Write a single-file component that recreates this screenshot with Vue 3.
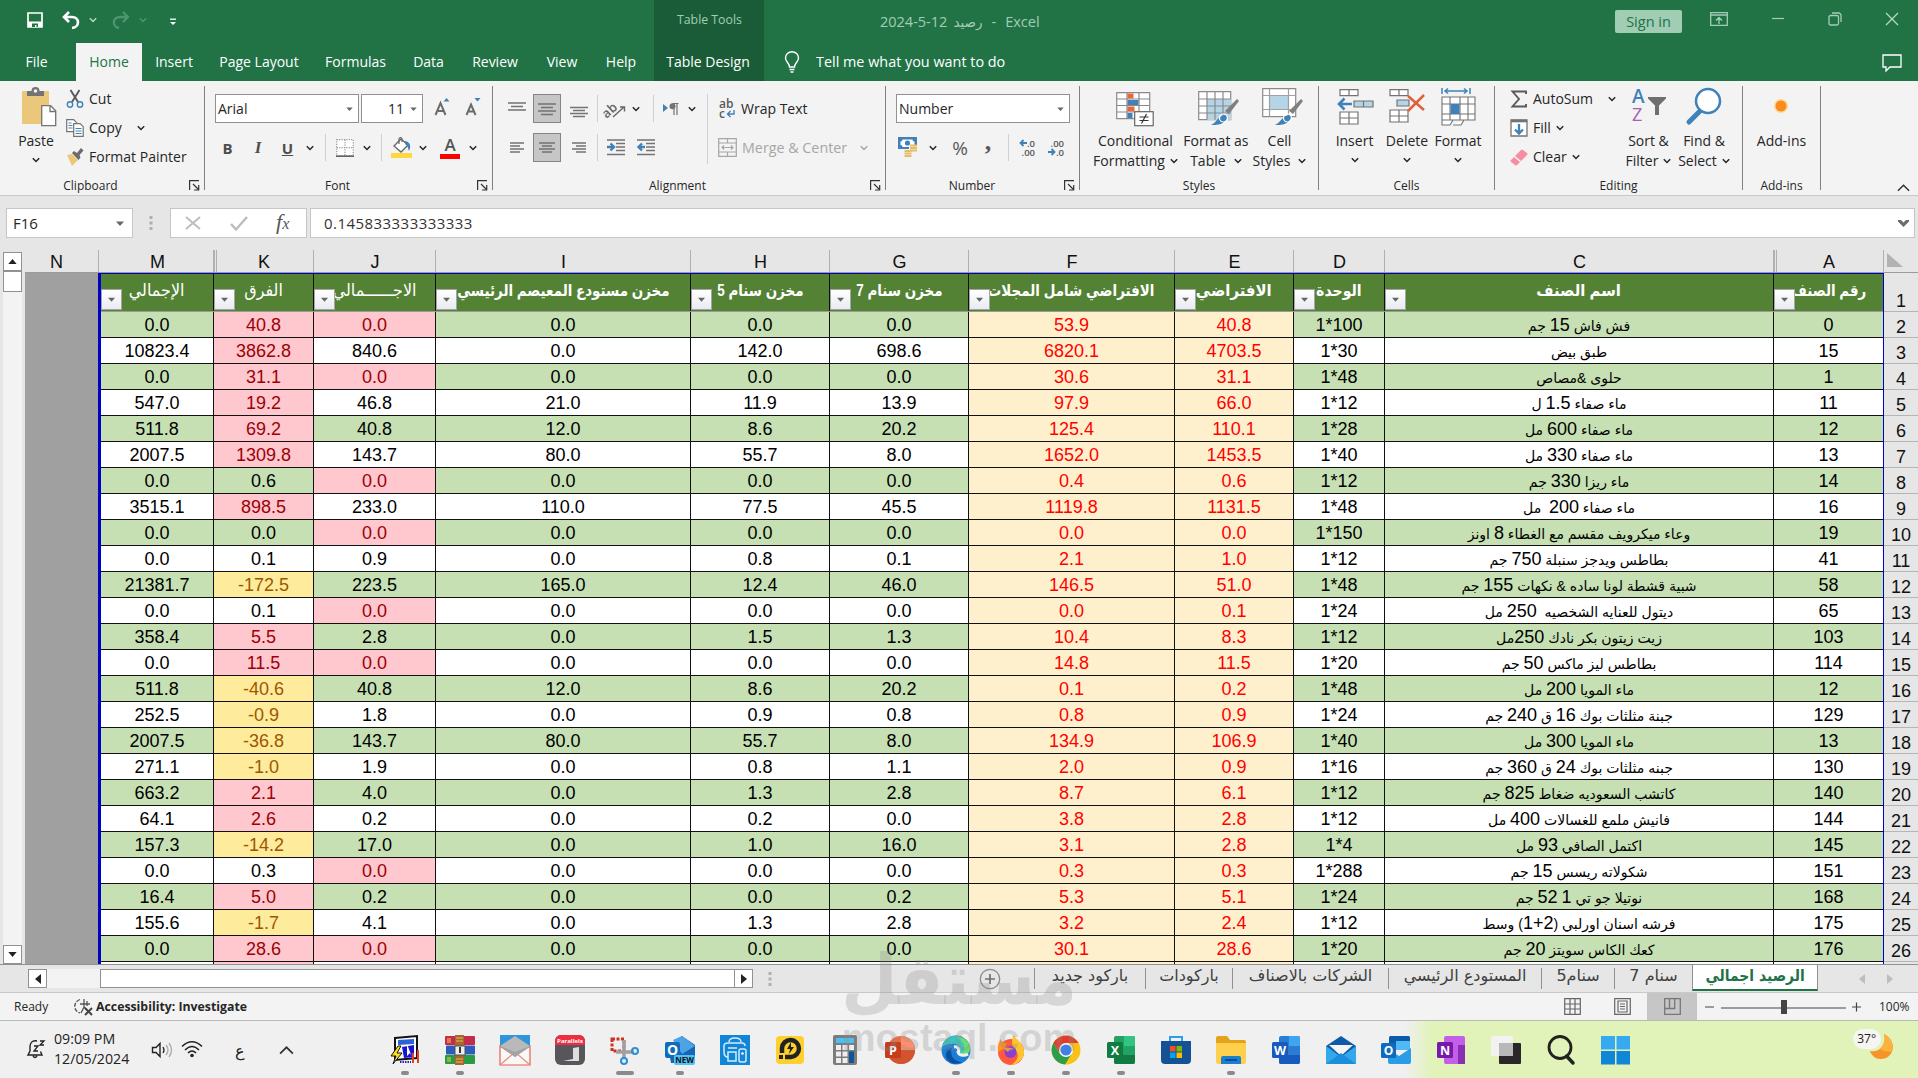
<template>
  <div class="screen">
    <header class="titlebar">
      <div class="quick">
        <Icon name="save" :w="16" :h="16" />
        <Icon name="undo" :w="20" :h="18" />
        <Icon name="chev" class="pale" :w="8" :h="6" />
        <Icon name="redo" :w="20" :h="18" />
        <Icon name="chev" class="dim" :w="8" :h="6" />
        <Icon name="custom" :w="8" :h="8" />
      </div>
      <div class="tools">Table Tools</div>
      <div class="doc">
        <span>2024-5-12</span><span class="doc-ar">رصيد</span><span class="dash">-</span><span>Excel</span>
      </div>
      <button class="signin">Sign in</button>
      <div class="window">
        <Icon name="ribbonOpts" :w="18" :h="14" />
        <Icon name="minimize" :w="14" :h="14" />
        <Icon name="restore" :w="14" :h="14" />
        <Icon name="close" :w="14" :h="14" />
      </div>
    </header>

    <nav class="tabs">
      <span v-for="t in tabs" :key="t.label" class="tab" :class="t.cls" :style="{ width: t.w + 'px' }">
        <b>{{ t.label }}</b>
      </span>
      <Icon name="bulb" class="bulb" :w="16" :h="22" />
      <span class="tell">Tell me what you want to do</span>
      <Icon name="comment" class="comment" :w="20" :h="18" />
    </nav>

    <section class="ribbon">
      <div class="group clipboard">
        <div class="clip-body">
          <div class="big paste">
            <Icon name="paste" :w="34" :h="40" />
            <span>Paste</span>
            <Icon name="chev" :w="8" :h="6" />
          </div>
          <div class="stack">
            <div class="line"><Icon name="cut" :w="18" :h="18" /><span>Cut</span></div>
            <div class="line"><Icon name="copy" :w="18" :h="18" /><span>Copy</span><Icon name="chev" class="gap-chev" :w="8" :h="6" /></div>
            <div class="line"><Icon name="painter" :w="18" :h="18" /><span class="tight">Format Painter</span></div>
          </div>
        </div>
        <div class="caption">Clipboard<Icon name="launch" class="launch" :w="11" :h="11" /></div>
      </div>

      <div class="group font">
        <div class="row font-top">
          <div class="select"><span>Arial</span><Icon name="tri" :w="7" :h="4" /></div>
          <div class="select size"><span>11</span><Icon name="tri" :w="7" :h="4" /></div>
          <Icon name="grow" :w="16" :h="18" />
          <Icon name="shrink" :w="16" :h="18" />
        </div>
        <div class="row font-bottom">
          <b class="fmt">B</b><i class="fmt ital">I</i><u class="fmt">U</u>
          <Icon name="chev" :w="8" :h="6" /><s class="bar" />
          <Icon name="borders" :w="18" :h="18" /><Icon name="chev" :w="8" :h="6" /><s class="bar" />
          <Icon name="fillColor" :w="21" :h="21" /><Icon name="chev" :w="8" :h="6" />
          <div class="fontcolor">A</div><Icon name="chev" :w="8" :h="6" />
        </div>
        <div class="caption">Font<Icon name="launch" class="launch" :w="11" :h="11" /></div>
      </div>

      <div class="group align">
        <div class="align-body">
          <div class="align-left">
            <div class="row align-row">
              <Icon name="alTop" :w="18" :h="16" />
              <div class="pressed"><Icon name="alMid" :w="18" :h="16" /></div>
              <Icon name="alBot" :w="18" :h="16" /><s class="bar" />
              <Icon name="orient" :w="20" :h="18" /><Icon name="chev" :w="8" :h="6" /><s class="bar" />
              <Icon name="rtl" :w="16" :h="14" /><Icon name="chev" :w="8" :h="6" />
            </div>
            <div class="row align-row second">
              <Icon name="alLeft" :w="16" :h="14" />
              <div class="pressed"><Icon name="alCenter" :w="18" :h="14" /></div>
              <Icon name="alRight" :w="16" :h="14" /><s class="bar" />
              <Icon name="indent" :w="18" :h="17" /><Icon name="outdent" :w="18" :h="17" />
            </div>
          </div>
          <div class="align-side">
            <div class="wrap"><Icon name="wrapText" :w="18" :h="20" /><span>Wrap Text</span></div>
            <div class="wrap off"><Icon name="merge" :w="19" :h="19" /><span>Merge &amp; Center</span><Icon name="chev" class="off-chev" :w="8" :h="6" /></div>
          </div>
        </div>
        <div class="caption">Alignment<Icon name="launch" class="launch" :w="11" :h="11" /></div>
      </div>

      <div class="group number">
        <div class="select numsel"><span>Number</span><Icon name="tri" :w="7" :h="4" /></div>
        <div class="row num-row">
          <Icon name="money" :w="24" :h="21" /><Icon name="chev" :w="8" :h="6" />
          <span class="pct">%</span><span class="comma">,</span><s class="bar" />
          <div class="dec"><span><Icon name="arrL" :w="8" :h="8" />.0</span><span>.00</span></div>
          <div class="dec"><span>.00</span><span><Icon name="arrR" :w="8" :h="8" />.0</span></div>
        </div>
        <div class="caption">Number<Icon name="launch" class="launch" :w="11" :h="11" /></div>
      </div>

      <div class="group styles">
        <div class="bigs">
          <div class="big"><Icon name="cond" :w="38" :h="40" /><span>Conditional</span><span>Formatting <Icon name="chev" :w="8" :h="6" /></span></div>
          <div class="big"><Icon name="fmtTable" :w="38" :h="40" /><span>Format as</span><span>Table <Icon name="chev" :w="8" :h="6" /></span></div>
          <div class="big"><Icon name="cellStyles" :w="38" :h="40" /><span>Cell</span><span>Styles <Icon name="chev" :w="8" :h="6" /></span></div>
        </div>
        <div class="caption">Styles</div>
      </div>

      <div class="group cells">
        <div class="bigs">
          <div class="big"><Icon name="insert" :w="38" :h="40" /><span>Insert</span><Icon name="chev" :w="8" :h="6" /></div>
          <div class="big"><Icon name="del" :w="38" :h="40" /><span>Delete</span><Icon name="chev" :w="8" :h="6" /></div>
          <div class="big"><Icon name="format" :w="38" :h="40" /><span>Format</span><Icon name="chev" :w="8" :h="6" /></div>
        </div>
        <div class="caption">Cells</div>
      </div>

      <div class="group editing">
        <div class="edit-body">
          <div class="stack">
            <div class="line"><Icon name="sigma" :w="18" :h="18" /><span>AutoSum</span><Icon name="chev" class="gap-chev" :w="8" :h="6" /></div>
            <div class="line"><Icon name="fillDown" :w="18" :h="18" /><span>Fill</span><Icon name="chev" class="near" :w="8" :h="6" /></div>
            <div class="line"><Icon name="eraser" :w="18" :h="18" /><span>Clear</span><Icon name="chev" class="near" :w="8" :h="6" /></div>
          </div>
          <div class="big sort"><Icon name="sort" :w="38" :h="40" /><span>Sort &amp;</span><span>Filter <Icon name="chev" :w="8" :h="6" /></span></div>
          <div class="big find"><Icon name="find" :w="38" :h="40" /><span>Find &amp;</span><span>Select <Icon name="chev" :w="8" :h="6" /></span></div>
        </div>
        <div class="caption">Editing</div>
      </div>

      <div class="group addins">
        <div class="bigs"><div class="big"><Icon name="addin" :w="38" :h="40" /><span>Add-ins</span></div></div>
        <div class="caption">Add-ins</div>
      </div>
      <Icon name="up" class="collapse" :w="13" :h="8" />
    </section>

    <section class="formula">
      <div class="namebox"><span>F16</span><Icon name="tri" :w="8" :h="5" /></div>
      <Icon name="dots" class="dots" :w="4" :h="14" />
      <div class="fx">
        <Icon name="cancel" :w="16" :h="14" />
        <Icon name="check" :w="18" :h="15" />
        <span class="fxs">f<small>x</small></span>
      </div>
      <div class="input"><span>0.145833333333333</span><Icon name="expand" :w="11" :h="7" /></div>
    </section>

    <section class="grid">
      <div class="vscroll">
        <div class="sbtn"><Icon name="triUp" :w="9" :h="5" /></div>
        <div class="thumb" />
        <div class="space" />
        <div class="sbtn"><Icon name="triDown" :w="9" :h="5" /></div>
      </div>
      <div class="sheet">
        <div class="letters">
          <span v-for="l in letters" :key="l" :class="{ dbl: l === 'K' || l === 'A' }">{{ l }}</span>
          <span class="corner"><Icon name="corner" :w="16" :h="14" /></span>
        </div>
        <div class="body">
          <div class="void" />
          <div class="table">
            <div class="head">
              <div v-for="h in heads" :key="h.text" class="th" :class="h.cls">
                <span dir="rtl">{{ h.text }}</span>
                <div class="filter"><Icon name="tri" :w="7" :h="5" /></div>
              </div>
            </div>
            <div v-for="(r, i) in rows" :key="i" class="tr" :class="{ even: i % 2 === 0 }">
              <div v-for="(c, j) in r" :key="j" :class="cellClass(c, j)">
                <span v-if="j === 9" dir="rtl" class="ar"><template v-for="(p, k) in split(c)" :key="k"><bdi v-if="k % 2" class="n" dir="ltr">{{ p }}</bdi><template v-else>{{ p }}</template></template></span>
                <template v-else>{{ c }}</template>
              </div>
            </div>
            <div class="tr last"><div v-for="j in 11" :key="j" :class="{ pink: j === 2, cream: j === 7 || j === 8 }" /></div>
          </div>
          <div class="nums">
            <span v-for="n in 26" :key="n">{{ n }}</span>
          </div>
        </div>
      </div>
    </section>

    <section class="sheetbar">
      <div class="sbtn"><Icon name="triLeft" :w="6" :h="10" /></div>
      <div class="htrack" />
      <div class="hthumb" />
      <div class="sbtn"><Icon name="triRight" :w="6" :h="10" /></div>
      <Icon name="dots" class="hdots" :w="4" :h="14" />
      <Icon name="plus" class="plus" :w="22" :h="22" />
      <div class="stabs">
        <span v-for="s in sheets" :key="s.text" dir="rtl" :class="{ active: s.active }" :style="{ width: s.w + 'px' }"><b>{{ s.text }}</b></span>
      </div>
      <Icon name="triLeft" class="nav" :w="6" :h="10" />
      <Icon name="triRight" class="nav" :w="6" :h="10" />
    </section>

    <section class="status">
      <span class="ready">Ready</span>
      <Icon name="access" :w="20" :h="18" />
      <b>Accessibility: Investigate</b>
      <div class="views">
        <div><Icon name="vNormal" :w="17" :h="17" /></div>
        <div><Icon name="vPage" :w="17" :h="17" /></div>
        <div class="on"><Icon name="vBreak" :w="17" :h="17" /></div>
      </div>
      <div class="zoom"><Icon name="zoomBar" :w="160" :h="16" /></div>
      <span class="pctz">100%</span>
    </section>

    <footer class="taskbar">
      <Icon name="bell" class="bell" :w="20" :h="20" />
      <div class="clock"><span>09:09 PM</span><span>12/05/2024</span></div>
      <Icon name="sound" class="sound" :w="22" :h="18" />
      <Icon name="wifi" class="wifi" :w="22" :h="18" />
      <span class="lang">ع</span>
      <Icon name="up" class="tray" :w="15" :h="9" />
      <div class="apps">
        <div v-for="a in apps" :key="a.icon" class="app">
          <Icon :name="a.icon" :w="30" :h="30" />
          <i v-if="a.run" :class="{ wide: a.run === 2 }" />
        </div>
      </div>
      <div class="weather"><Icon name="moon" :w="28" :h="32" /><span>37°</span></div>
    </footer>

    <div class="mark">
      <div class="mark-ar">مستقل</div>
      <div class="mark-en">mostaql.com</div>
    </div>
  </div>
</template>

<script setup>
import { h } from 'vue';

const G = '#737373';
const B = '#4082b8';
const hl = (pts, c = G, sw = 1.3) =>
  `<path d="${pts.map(([x, y, w]) => `M${x} ${y}h${w}`).join('')}" stroke="${c}" stroke-width="${sw}" fill="none"/>`;
const officeIcon = (dark, mid, light, letter) =>
  `<rect x="8" y="1" width="21" height="28" rx="2" fill="${mid}"/><path d="M18 1h9a2 2 0 0 1 2 2v8h-11z" fill="${light}"/><path d="M8 20h21v7a2 2 0 0 1-2 2H10a2 2 0 0 1-2-2z" fill="${dark}"/><rect x="1" y="7" width="16" height="16" rx="1.500" fill="${dark}"/><text x="9" y="19.500" font-family="Open Sans" font-weight="700" font-size="12.500" fill="#fff" text-anchor="middle">${letter}</text>`;
const brush = `<path d="M39 12 41 14 31 27 27 24z" fill="#808080"/><path d="M24 29c4-3 7 2 3 5-3 4-9 4-14 4 5-2 6-7 11-9z" fill="${B}"/><circle cx="25.500" cy="31" r="4" fill="none" stroke="#fff" stroke-width="1.200"/>`;

// [viewBox, markup]
const icons = {
  save: ['0 0 16 16', '<path d="M1 1h14v14H1z" fill="none" stroke="#fff" stroke-width="1.700"/><path d="M1 9.500h14V15H1z" fill="#fff"/><path d="M5 11.500h6V15H9.500v-2H8v2H5z" fill="#217346"/>'],
  undo: ['0 0 20 18', '<path d="M8 1 3 6l5 5M3 6h8c8 0 8 10 0 11" fill="none" stroke="#fff" stroke-width="2.600"/>'],
  redo: ['0 0 20 18', '<path d="M12 1l5 5-5 5M17 6H9C1 6 1 16 8 17" fill="none" stroke="#4f9470" stroke-width="2.400"/>'],
  custom: ['0 0 8 8', '<path d="M1 1.200h6" stroke="#fff" stroke-width="1.300"/><path d="M1 4h6L4 7z" fill="#fff"/>'],
  chev: ['0 0 8 6', '<path d="M.8 1.200 4 4.500l3.200-3.300" fill="none" stroke="currentColor" stroke-width="1.500"/>'],
  up: ['0 0 14 8', '<path d="M1 7l6-6 6 6" fill="none" stroke="#333" stroke-width="1.600"/>'],
  tri: ['0 0 8 5', '<path d="M0 .500h8L4 5z" fill="#666"/>'],
  triUp: ['0 0 10 6', '<path d="M0 6h10L5 0z" fill="#222"/>'],
  triDown: ['0 0 10 6', '<path d="M0 0h10L5 6z" fill="#222"/>'],
  triLeft: ['0 0 6 10', '<path d="M6 0v10L0 5z" fill="currentColor"/>'],
  triRight: ['0 0 6 10', '<path d="M0 0v10l6-5z" fill="currentColor"/>'],
  ribbonOpts: ['0 0 18 14', '<path d="M.7.700h16.600v12.600H.7zM.7 3h16.600M9 12V6M6 8.500 9 5.500l3 3" fill="none" stroke="#a3cdb6" stroke-width="1.300"/>'],
  minimize: ['0 0 14 14', '<path d="M1 6.500h12" stroke="#a3cdb6" stroke-width="1.200"/>'],
  restore: ['0 0 14 14', '<rect x="1" y="3.500" width="9.500" height="9.500" rx="1.500" fill="none" stroke="#a3cdb6" stroke-width="1.300"/><path d="M4 1h6.500A2.500 2.500 0 0 1 13 3.500V10" fill="none" stroke="#a3cdb6" stroke-width="1.300"/>'],
  close: ['0 0 14 14', '<path d="M1 1l12 12M13 1 1 13" stroke="#b5d8c5" stroke-width="1.300"/>'],
  bulb: ['0 0 16 22', '<path d="M5.500 16c0-4-4-5-4-9a6.500 6.300 0 0 1 13 0c0 4-4 5-4 9zM5.500 18.500h5M6.500 21h3" fill="none" stroke="#fff" stroke-width="1.400"/>'],
  comment: ['0 0 20 18', '<path d="M1 1h18v12H8l-4 4v-4H1z" fill="none" stroke="#fff" stroke-width="1.300"/>'],
  paste: ['0 0 34 40', '<rect x="0" y="4" width="27" height="33" rx="1" fill="#eac77b"/><path d="M5 9V4h4.500a4 4 0 0 1 8 0H22v5z" fill="#737373"/><circle cx="13.500" cy="4" r="1.800" fill="#f3f3f3"/><path d="M19.700 18.700h9l5 5v15h-14z" fill="#fff" stroke="#737373" stroke-width="1.300"/><path d="M28 19v5.500h5.500" fill="none" stroke="#737373" stroke-width="1.300"/>'],
  cut: ['0 0 18 18', `<path d="M4.500 0 12 12M13.500 0 6 12" stroke="#595959" stroke-width="1.900"/><circle cx="4" cy="14.500" r="2.700" fill="none" stroke="${B}" stroke-width="1.400"/><circle cx="14" cy="14.500" r="2.700" fill="none" stroke="${B}" stroke-width="1.400"/>`],
  copy: ['0 0 18 18', `<path d="M.7.700h7l3 3v9H.7z" fill="#fff" stroke="${G}" stroke-width="1.200"/><path d="M7.700 4.700h6.500l3 3v9.600H7.700z" fill="#fff" stroke="${G}" stroke-width="1.200"/>${hl([[2.5, 4, 3], [2.5, 6.500, 4], [2.5, 9, 4], [9.500, 9.500, 6], [9.500, 12, 6], [9.500, 14.500, 6]], B, 1)}`],
  painter: ['0 0 18 18', '<path d="M1 7l5-1 6 6-6 6z" fill="#eac77b"/><path d="M6 5l2-2 3 2 4-5 2.500 2.500L13.500 7l1 2.500L12.500 12z" fill="#6b6b6b"/>'],
  launch: ['0 0 11 11', '<path d="M.6 10V.600H10M4 4l5 5M9.700 5v5H5" fill="none" stroke="#333" stroke-width="1.200"/>'],
  grow: ['0 0 16 18', `<path d="M1.500 17 6.500 5 11.500 17M3.300 13h6.500" fill="none" stroke="#6b6b6b" stroke-width="2"/><path d="M9.500 3.500h6L12.500 0z" fill="${B}"/>`],
  shrink: ['0 0 16 18', `<path d="M1.500 17 6 6.500 10.500 17M3 13.500h6" fill="none" stroke="#6b6b6b" stroke-width="2"/><path d="M9.500 0h6l-3 3.500z" fill="${B}"/>`],
  borders: ['0 0 18 18', `<path d="M.7.700h16.600v16H.7zM9 .700v16M.7 8.700h16.600" fill="#fff" stroke="#999" stroke-width="1.200" stroke-dasharray="1.200 1.200"/><path d="M0 17.200h18" stroke="#555" stroke-width="1.400"/>`],
  fillColor: ['0 0 21 21', `<path d="M3 9 10 2l7 6-7 7z" fill="#fff" stroke="#666" stroke-width="1.300"/><path d="M8 7V2c0-2 3-2 3 0v3" fill="none" stroke="#666" stroke-width="1.200"/><path d="M14 4c6 1 6 6 4 10-1-3-1-5-4-7z" fill="${B}"/><rect x="0" y="16" width="21" height="5" fill="#ffd83d"/>`],
  alTop: ['0 0 18 16', hl([[0, 2, 18], [3, 5.500, 12], [0, 9, 18]])],
  alMid: ['0 0 18 16', hl([[0, 3, 18], [3, 6.500, 12], [0, 10, 18], [3, 13.500, 12]])],
  alBot: ['0 0 18 16', hl([[0, 6.500, 18], [3, 9.500, 12], [0, 12.500, 18], [3, 15.500, 12]])],
  alLeft: ['0 0 16 14', hl([[1, 2, 14], [1, 5, 10], [1, 8, 14], [1, 11, 10]])],
  alCenter: ['0 0 18 14', hl([[1, 2, 16], [4, 5, 10], [1, 8, 16], [4, 11, 10]])],
  alRight: ['0 0 16 14', hl([[1, 2, 14], [5, 5, 10], [1, 8, 14], [5, 11, 10]])],
  orient: ['0 0 20 18', '<text x="-4" y="13" transform="rotate(-42 6 10)" font-family="Open Sans" font-weight="600" font-size="13" fill="#666">ab</text><path d="M7 17 18 7M14 7h4.500v4.500" fill="none" stroke="#666" stroke-width="1.400"/>'],
  rtl: ['0 0 16 14', `<path d="M0 2v8l5-4z" fill="${B}"/><path d="M15.500 1.500h-6M11 1v12M14 1v12" stroke="${G}" stroke-width="1.200"/><circle cx="9.500" cy="4.300" r="3" fill="${G}"/>`],
  indent: ['0 0 18 17', `${hl([[0, 1, 18], [9, 4.500, 9], [9, 8, 9], [9, 11.500, 9], [0, 15.500, 18]])}<path d="M0 8h6M3.500 4.500 7 8l-3.500 3.500" fill="none" stroke="${B}" stroke-width="2.400"/>`],
  outdent: ['0 0 18 17', `${hl([[0, 1, 18], [9, 4.500, 9], [9, 8, 9], [9, 11.500, 9], [0, 15.500, 18]])}<path d="M8 8H2M5 4.500 1.500 8 5 11.500" fill="none" stroke="${B}" stroke-width="2.400"/>`],
  wrapText: ['0 0 18 20', `<text x="1" y="9" font-family="Open Sans" font-weight="600" font-size="12" fill="#595959">ab</text><text x="1" y="19" font-family="Open Sans" font-weight="600" font-size="12" fill="#595959">c</text><path d="M16 11v4H10M12.500 12 9.500 15l3 3" fill="none" stroke="${B}" stroke-width="1.400"/>`],
  merge: ['0 0 19 19', '<path d="M.7.700h17.600v17.600H.7zM.7 5h17.600M.7 14h17.600M9.500.700V5M9.500 14v4.300M4 9.500h11M6 7.500l-2 2 2 2M13 7.500l2 2-2 2" fill="none" stroke="#a6a6a6" stroke-width="1.200"/>'],
  money: ['0 0 24 21', `<rect x="0" y="0" width="19" height="12" fill="${B}"/><path d="M2.500 4.500c2 0 2-2 2-2h10s0 2 2 2v3.500c-2 0-2 2-2 2h-10s0-2-2-2z" fill="#fff"/><circle cx="9.500" cy="6" r="2.600" fill="${B}"/><path d="M11 8h8v12h-8z" fill="#f3f3f3"/><path d="M12 8.500h7M12 11h7M12 13.500h7M6.500 14h7M6.500 16.500h7M6.500 19h7" stroke="#e5bd67" stroke-width="1.900"/>`],
  arrL: ['0 0 8 8', `<path d="M8 4H2M4.500 1 1.500 4l3 3" fill="none" stroke="${B}" stroke-width="1.800"/>`],
  arrR: ['0 0 8 8', `<path d="M0 4h6M3.500 1l3 3-3 3" fill="none" stroke="${B}" stroke-width="1.800"/>`],
  cond: ['0 0 38 40', `<path d="M.7 5.700h33v26h-33zM.7 12h33M.7 18.500h33M.7 25h33M11 5.700v26M23 5.700v26" fill="#fff" stroke="#8a8a8a" stroke-width="1.200"/><path d="M11.500 6.500h6v5h-6zM11.500 19.500h7v5h-7z" fill="#e8683a"/><path d="M11.500 13h11v5h-11zM11.500 26h5v5h-5z" fill="${B}"/><rect x="18.700" y="24.700" width="18.500" height="14" fill="#fff" stroke="#666" stroke-width="1.200"/><path d="M23.500 30h9M23.500 33.500h9M30.500 27l-5 9.500" stroke="#333" stroke-width="1.200"/>`],
  fmtTable: ['0 0 38 40', `<path d="M.7 4.700h32v28h-32z" fill="#fff" stroke="#8a8a8a" stroke-width="1.200"/><path d="M9 12h24v21H9z" fill="#b5d4e6"/><path d="M.7 12h32M.7 19h32M.7 26h32M9 4.700v28M17 4.700v28M25 4.700v28" stroke="#8a8a8a" stroke-width="1.200"/>${brush}`],
  cellStyles: ['0 0 38 40', `<path d="M.7 1.700h33v28h-33z" fill="#fff" stroke="#8a8a8a" stroke-width="1.200"/><path d="M8 9h18v13H8z" fill="#b5d4e6"/><path d="M.7 8.500h33M.7 22.500h33M7.500 1.700v28M26.500 1.700v28" stroke="#a0a0a0" stroke-width="1.200"/>${brush}`],
  insert: ['0 0 38 40', `<path d="M4 2.700h18v6H4zM13 2.700v6M4 25h18v12H4zM13 25v12M4 31h18" fill="#fff" stroke="${G}" stroke-width="1.200"/><path d="M18 14h19v6H18zM27.500 14v6" fill="#b5d4e6" stroke="${G}" stroke-width="1.200"/><path d="M16 17H3M8.500 11.500 3 17l5.500 5.500" fill="none" stroke="${B}" stroke-width="2.600"/>`],
  del: ['0 0 38 40', `<path d="M2 2.700h18v6H2zM11 2.700v6M2 23h18v12H2zM11 23v12M2 29h18" fill="#fff" stroke="${G}" stroke-width="1.200"/><path d="M9 13h12v6H9z" fill="#b5d4e6" stroke="${G}" stroke-width="1.200"/><path d="M20 9 36 23M36 8 20 24" stroke="#de6137" stroke-width="2.500"/>`],
  format: ['0 0 38 40', `<path d="M3 1v6M31 1v6M6 4h22M9 1.500 6 4l3 2.500M25 1.500 28 4l-3 2.500" fill="none" stroke="${B}" stroke-width="1.500"/><path d="M3 10h33v23H3zM3 17h33M3 27h33M11 10v23M21 10v23M29 10v23M3 33v5h8l3-5M14 38h8l3-5" fill="#fff" stroke="${G}" stroke-width="1.100"/><rect x="11.500" y="17" width="9" height="10" fill="${B}"/>`],
  sigma: ['0 0 18 18', '<path d="M16 4V1.500H2.500L9 9l-6.500 7.500H16V14" fill="none" stroke="#595959" stroke-width="1.900"/>'],
  fillDown: ['0 0 18 18', `<path d="M1 1h16v16H1z" fill="#fff" stroke="${G}" stroke-width="1.300"/><path d="M1 2h16" stroke="${G}" stroke-width="2.600"/><path d="M9 5v9M5 10.500 9 14.500l4-4" fill="none" stroke="${B}" stroke-width="2.300"/>`],
  eraser: ['0 0 18 18', '<path d="M1 12 11 2q1-1 2 0l4 3q1 1 0 2L7 17q-1 1-2 0l-4-3q-1-1 0-2z" fill="#f58ea3"/><path d="M4.500 8.500l6 5" stroke="#fff" stroke-width="1.200"/>'],
  sort: ['0 0 38 40', `<text x="2" y="16" font-family="Open Sans" font-weight="600" font-size="19" fill="${B}">A</text><text x="2" y="34" font-family="Open Sans" font-size="18" fill="#a463b0">Z</text><path d="M18 10h18v1.500l-7 7V28h-4v-9.500l-7-7z" fill="#6f6f6f"/>`],
  find: ['0 0 38 40', `<path d="M16 23 4 35" stroke="${B}" stroke-width="5" stroke-linecap="round"/><circle cx="23" cy="14" r="12" fill="#fff" stroke="${B}" stroke-width="2.500"/>`],
  addin: ['0 0 38 40', '<circle cx="19" cy="17" r="7" fill="#ffd79a"/><circle cx="19" cy="17" r="5.500" fill="#fa8c1e"/>'],
  dots: ['0 0 4 14', '<path d="M.5 0h3v3h-3zM.5 5.500h3v3h-3zM.5 11h3v3h-3z" fill="#b0b0b0"/>'],
  cancel: ['0 0 16 14', '<path d="M1 1l14 12M15 1 1 13" stroke="#bdbdbd" stroke-width="2"/>'],
  check: ['0 0 18 15', '<path d="M1 8l5 5.500L17 1" fill="none" stroke="#bdbdbd" stroke-width="2.500"/>'],
  expand: ['0 0 11 7', '<path d="M0 0h3l2.500 2.500L8 0h3v1.500L5.500 7 0 1.500z" fill="#6b6b6b"/>'],
  corner: ['0 0 16 14', '<path d="M0 0l16 14H0z" fill="#b2b2b2"/>'],
  plus: ['0 0 22 22', '<circle cx="11" cy="11" r="9.700" fill="none" stroke="#8a8a8a" stroke-width="1.300"/><path d="M11 6v10M6 11h10" stroke="#707070" stroke-width="1.700"/>'],
  access: ['0 0 20 18', '<path d="M6 1.500C-1 4-1 13 6 15" fill="none" stroke="#555" stroke-width="1.300" stroke-dasharray="4 1.500"/><path d="M6 6h10M10 1v8l-3 6M10 9l3 3M13 3v5" fill="none" stroke="#555" stroke-width="1.300"/><path d="M11 10l7 7M18 10l-7 7" stroke="#444" stroke-width="2"/>'],
  vNormal: ['0 0 17 17', '<path d="M.7.700h15.600v15.600H.7zM6 .700v15.600M11 .700v15.600M.7 6h15.600M.7 11h15.600" fill="none" stroke="#666" stroke-width="1.200"/>'],
  vPage: ['0 0 17 17', '<path d="M.7.700h15.600v15.600H.7zM4 3h9v11H4zM6 6h5M6 8.500h5M6 11h5" fill="none" stroke="#666" stroke-width="1.200"/>'],
  vBreak: ['0 0 17 17', '<path d="M.7.700h15.600v15.600H.7zM.7 10.500h10V.700M5.500.700v9.800" fill="none" stroke="#777" stroke-width="1.300"/>'],
  zoomBar: ['0 0 160 16', '<path d="M1 8h9M148 8h9M152.500 3.500v9M17 9h125" stroke="#444" stroke-width="1.200"/><rect x="77" y="1" width="6" height="14" fill="#444"/>'],
  bell: ['0 0 20 20', '<path d="M11 2C6 1 4 4 4 8v4l-2 4h14l-1.500-3.500M7 17q2 3 4 0" fill="none" stroke="#222" stroke-width="1.400"/><path d="M8 7h4l-4 5h4M14 2h4l-4 4h4" fill="none" stroke="#222" stroke-width="1.300"/>'],
  sound: ['0 0 22 18', '<path d="M1.500 6.500h3.500l4-4v13l-4-4H1.500z" fill="none" stroke="#222" stroke-width="1.400"/><path d="M12 6q2 3 0 6" fill="none" stroke="#222" stroke-width="1.300"/><path d="M15 4q4 5 0 10M18 2q5 7 0 14" fill="none" stroke="#aaa" stroke-width="1.300"/>'],
  wifi: ['0 0 22 18', '<path d="M1 6.500q10-9.500 20 0M4 10q7-7 14 0M7 13q4-4 8 0" fill="none" stroke="#222" stroke-width="1.600"/><circle cx="11" cy="15.500" r="1.800" fill="#222"/>'],
  designer: ['0 0 30 30', '<path d="M5 3 27 1v22L5 25z" fill="#fff" stroke="#111" stroke-width="2"/><path d="M8 5l16-1v5L8 10z" fill="#2a62d8"/><path d="M12 12l12-2v12l-10 1z" fill="#1717d0"/><path d="M17 9v12l3-3 2 4" fill="#fff"/><path d="M8 11 1 21h5l-3 8 9-11H7l4-7z" fill="#ffdf1c" stroke="#111"/><path d="M22 18h2v10h-2zM27 15h2v13h-2z" fill="#e8401f"/><path d="M10 27h11" stroke="#2222c0" stroke-width="2" stroke-dasharray="1.500 1"/>'],
  winrar: ['0 0 30 30', '<rect x="0" y="1" width="30" height="9" rx="1" fill="#c52c4c"/><rect x="1" y="10.500" width="29" height="9" rx="1" fill="#2c5cbd"/><rect x="0" y="20" width="30" height="9" rx="1" fill="#2a9a44"/><path d="M3 3v5M5 3v5M3 22v5M5 22v5" stroke="#f0d050"/><rect x="10" y="0" width="9" height="30" fill="#a8682c"/><rect x="10" y="11" width="10" height="9" fill="#eee" stroke="#555"/><path d="M15 12v6" stroke="#333" stroke-width="2"/><path d="M11 3h7M11 6h7M11 24h7M11 27h7" stroke="#e8b860"/>'],
  gmail: ['0 0 30 30', '<rect width="30" height="14" fill="#2f96dc"/><path d="M0 11v19h30V11L15 21z" fill="#f8f8f8" stroke="#e8604f" stroke-width="1.200"/><path d="M0 30l15-13 15 13" fill="none" stroke="#ee8a80" stroke-width="1.200"/><path d="M0 11 15 1l15 10-15 11z" fill="#b9b9b9"/><path d="M0 11l15 11 15-11-15 6z" fill="#a2a2a2"/>'],
  parallels: ['0 0 30 30', '<rect x="0" y="0" width="30" height="30" rx="6" fill="#57575b"/><path d="M0 10V6a6 6 0 0 1 6-6h18a6 6 0 0 1 6 6v4z" fill="#ee2c42"/><text x="15" y="8" font-family="Open Sans" font-weight="700" font-size="6" fill="#fff" text-anchor="middle">Parallels</text><path d="M18 13l6-1v14H8l10-2z" fill="#ddd"/>'],
  snip: ['0 0 30 30', '<path d="M2 4h12v12H2z" fill="none" stroke="#cf3120" stroke-width="3" stroke-dasharray="3 1.500"/><path d="M14 5v18M6 17h18" stroke="#a0a0a0" stroke-width="3.500"/><circle cx="25" cy="16" r="3" fill="none" stroke="#2d8fd8" stroke-width="2"/><circle cx="14" cy="26" r="3" fill="none" stroke="#2d8fd8" stroke-width="2"/>'],
  outlookNew: ['0 0 30 30', '<path d="M3 12 17 1l13 9v18H6z" fill="#1766b5"/><path d="M8 5 17 1l13 10-13 8z" fill="#4da3e4"/><rect x="0" y="7" width="15" height="16" rx="2" fill="#0f6cbd"/><text x="7.500" y="20" font-family="Open Sans" font-weight="700" font-size="14" fill="#fff" text-anchor="middle">O</text><rect x="9" y="20" width="21" height="10" rx="2" fill="#4fc3f7"/><text x="19.500" y="28" font-family="Open Sans" font-weight="700" font-size="8" fill="#111" text-anchor="middle">NEW</text>'],
  printer: ['0 0 30 30', '<rect width="30" height="30" fill="#0f86d8"/><path d="M9 7q0-4 6-4t6 4M4 17V11q0-3 4-3h14q3 0 3 3M8 13h9M8 17h8v9H8zM4 17q0 5 4 5" fill="none" stroke="#d5ebfa" stroke-width="1.500"/><rect x="19" y="14" width="7" height="13" rx="2" fill="#0f86d8" stroke="#d5ebfa" stroke-width="1.500"/><circle cx="22.500" cy="18.500" r="1.300" fill="#fff"/>'],
  disk: ['0 0 30 30', '<rect x="1" y="1" width="28" height="28" rx="4" fill="#fdd02c"/><path d="M7 18V13a8.500 8.500 0 1 1 9 9H10" fill="none" stroke="#222" stroke-width="4.500"/><path d="M16 7l-4 7h3l-1 5 5-7h-3z" fill="#222"/><path d="M4 20h4v4H4z" fill="#222"/>'],
  calc: ['0 0 30 30', '<rect x="3" y="0" width="24" height="30" rx="2" fill="#7c7c7c"/><rect x="6" y="3" width="18" height="5" fill="#4cc2f4"/><path d="M6 10h5v5H6zM12.500 10h5v5h-5zM19 10h5v5h-5zM6 16.500h5v5H6zM12.500 16.500h5v5h-5zM6 23h5v5H6zM12.500 23h5v5h-5z" fill="#eee"/><path d="M19 16.500h5V28h-5z" fill="#155399"/>'],
  ppt: ['0 0 30 30', '<circle cx="16" cy="15" r="14" fill="#ed6c47"/><path d="M16 1a14 14 0 0 1 14 14H16z" fill="#ff8f6b"/><path d="M2 15h28a14 14 0 0 1-28 0z" fill="#d35230"/><rect x="0" y="7" width="16" height="16" rx="1.500" fill="#c43e1c"/><text x="8" y="19.500" font-family="Open Sans" font-weight="700" font-size="12.500" fill="#fff" text-anchor="middle">P</text>'],
  edge: ['0 0 30 30', '<circle cx="15" cy="15" r="14.500" fill="#1a7fd4"/><path d="M1 13C3 2 14-2 22 3c7 4 9 12 5 16-4 3-9 2-9-2 3-5-2-9-7-8C5 9 2 11 1 13z" fill="#36c6c0"/><path d="M15 2c8-1 14 5 14 11 0 5-5 8-11 5 8 0 7-11-3-16z" fill="#6bdc70"/><path d="M11 13c-3 7 2 14 10 14-9 5-17-2-16-8 1-4 4-6 6-6z" fill="#0b4f9e"/><path d="M13 12c4-1 6 3 4 5 1 4 7 4 10 2" fill="none" stroke="#f0f0f0" stroke-width="3"/>'],
  firefox: ['0 0 30 30', '<circle cx="15" cy="17" r="13" fill="#ff5a3c"/><path d="M18 0c2 5 10 8 10 17 0 7-6 12-13 13 9-6 8-12 3-16-2-4-3-9 0-14z" fill="#ffc52e"/><path d="M2 17C1 11 3 6 5 4c0 4 3 4 6 4-2 2-1 4-2 5z" fill="#ff9420"/><circle cx="14.500" cy="17" r="6" fill="#8a3fd1"/><path d="M7 13q7-1 11 1-5 0-6 3z" fill="#ffa030"/>'],
  chrome: ['0 0 30 30', '<circle cx="15" cy="15" r="14.500" fill="#fbc116"/><path d="M2.500 7.700A14.500 14.500 0 0 1 27.600 8H15L8.500 18.500z" fill="#e33b2e"/><path d="M2.500 7.700A14.500 14.500 0 0 0 14 29.500L20.500 19l-12-.500z" fill="#2c9e4b"/><circle cx="15" cy="15" r="7" fill="#fff"/><circle cx="15" cy="15" r="5.600" fill="#3f7fe8"/>'],
  excel: ['0 0 30 30', officeIcon('#107c41', '#21a366', '#33c481', 'X')],
  store: ['0 0 30 30', '<path d="M9 6V2h12v4" fill="none" stroke="#2ba0e8" stroke-width="2"/><path d="M0 6h30v19a4 4 0 0 1-4 4H4a4 4 0 0 1-4-4z" fill="#155293"/><path d="M9 11h5.500v5.500H9z" fill="#f25022"/><path d="M15.500 11H21v5.500h-5.500z" fill="#7fba00"/><path d="M9 17.500h5.500V23H9z" fill="#00a4ef"/><path d="M15.500 17.500H21V23h-5.500z" fill="#ffb900"/>'],
  folder: ['0 0 30 30', '<path d="M0 3q0-2 2-2h9l3 4h14q2 0 2 2v4H0z" fill="#e5a31b"/><path d="M0 8h30v19q0 2-2 2H2q-2 0-2-2z" fill="#fdd04e"/><path d="M5 29v-6q0-2 2-2h16q2 0 2 2v6z" fill="#1b7fd0"/><path d="M9 25h12" stroke="#0b4f8c" stroke-width="2"/>'],
  word: ['0 0 30 30', officeIcon('#185abd', '#2b7cd3', '#41a5ee', 'W')],
  mail: ['0 0 30 30', '<path d="M0 11 15 1l15 10v18H0z" fill="#0f5ba8"/><path d="M3 10h24L15 21z" fill="#f5f5f5"/><path d="M0 11l15 11L30 11v18H0z" fill="#33a9ea"/><path d="M0 29l15-11 15 11z" fill="#1b8fdc"/>'],
  outlook: ['0 0 30 30', '<rect x="8" y="1" width="21" height="14" rx="1.500" fill="#0a5ca8"/><path d="M15 6h14v9H15z" fill="#50b8f4"/><path d="M7 14l11 7 12-8v14a2 2 0 0 1-2 2H9a2 2 0 0 1-2-2z" fill="#2a9de6"/><rect x="0" y="8" width="15" height="15" rx="1.500" fill="#0f6cbd"/><text x="7.500" y="20" font-family="Open Sans" font-weight="700" font-size="12" fill="#fff" text-anchor="middle">O</text>'],
  onenote: ['0 0 30 30', '<rect x="8" y="1" width="21" height="28" rx="2" fill="#c45ee8"/><path d="M22 10h7v19h-7z" fill="#8b2fb5"/><rect x="1" y="7" width="16" height="16" rx="1.500" fill="#7719aa"/><text x="9" y="19.500" font-family="Open Sans" font-weight="700" font-size="12.500" fill="#fff" text-anchor="middle">N</text>'],
  taskview: ['0 0 30 30', '<rect x="8" y="8" width="22" height="21" rx="1" fill="#2b2629"/><rect x="0" y="1" width="22" height="20" rx="1" fill="#f2f2f2"/><rect x="8" y="8" width="14" height="13" fill="#b8b8b8"/>'],
  search: ['0 0 30 30', '<circle cx="14" cy="12.500" r="11" fill="none" stroke="#222" stroke-width="2.800"/><path d="M20.500 21l6.500 7" stroke="#222" stroke-width="3.500" stroke-linecap="round"/>'],
  start: ['0 0 30 30', '<path d="M0 1h14v13.500H0zM15.500 1H29v13.500H15.500z" fill="#36aaf0"/><path d="M0 16h14v13.500H0zM15.500 16H29v13.500H15.500z" fill="#0f86d8"/>'],
  moon: ['0 0 28 32', '<path d="M19 5c12 6 11 20 2 24-8 3-14-1-16-7 10 2 17-7 14-17z" fill="#f8932a"/><path d="M19 5c8 4 10 12 7 18-3-1-8 0-11-3 4-4 5-9 4-15z" fill="#fdb23c"/>'],
};

const Icon = (p) =>
  h('svg', { class: 'ic', width: p.w, height: p.h, viewBox: icons[p.name][0], innerHTML: icons[p.name][1] });
Icon.props = ['name', 'w', 'h'];

const tabs = [
  { label: 'File', w: 73, cls: 'file' },
  { label: 'Home', w: 66, cls: 'home' },
  { label: 'Insert', w: 64 },
  { label: 'Page Layout', w: 106 },
  { label: 'Formulas', w: 87 },
  { label: 'Data', w: 59 },
  { label: 'Review', w: 74 },
  { label: 'View', w: 60 },
  { label: 'Help', w: 58 },
  { label: 'Table Design', w: 110, cls: 'design' },
];

const letters = ['N', 'M', 'K', 'J', 'I', 'H', 'G', 'F', 'E', 'D', 'C', 'A'];

const heads = [
  { text: 'الإجمالي', cls: 'light' },
  { text: 'الفرق', cls: 'light' },
  { text: 'الاجــــــمالي', cls: 'light' },
  { text: 'مخزن مستودع المعيصم الرئيسي' },
  { text: 'مخزن سنام 5' },
  { text: 'مخزن سنام 7' },
  { text: 'الافتراضي شامل المجلات' },
  { text: 'الافتراضي', cls: 'large' },
  { text: 'الوحدة', cls: 'unit' },
  { text: 'اسم الصنف', cls: 'large' },
  { text: 'رقم الصنف' },
];

const rows = [
  ['0.0', '40.8', '0.0', '0.0', '0.0', '0.0', '53.9', '40.8', '1*100', 'فش فاش 15 جم', '0'],
  ['10823.4', '3862.8', '840.6', '0.0', '142.0', '698.6', '6820.1', '4703.5', '1*30', 'طبق بيض', '15'],
  ['0.0', '31.1', '0.0', '0.0', '0.0', '0.0', '30.6', '31.1', '1*48', 'حلوى &مصاص', '1'],
  ['547.0', '19.2', '46.8', '21.0', '11.9', '13.9', '97.9', '66.0', '1*12', 'ماء صفاء 1.5 ل', '11'],
  ['511.8', '69.2', '40.8', '12.0', '8.6', '20.2', '125.4', '110.1', '1*28', 'ماء صفاء 600 مل', '12'],
  ['2007.5', '1309.8', '143.7', '80.0', '55.7', '8.0', '1652.0', '1453.5', '1*40', 'ماء صفاء 330 مل', '13'],
  ['0.0', '0.6', '0.0', '0.0', '0.0', '0.0', '0.4', '0.6', '1*12', 'ماء ريزا 330 جم', '14'],
  ['3515.1', '898.5', '233.0', '110.0', '77.5', '45.5', '1119.8', '1131.5', '1*48', 'ماء صفاء 200  مل', '16'],
  ['0.0', '0.0', '0.0', '0.0', '0.0', '0.0', '0.0', '0.0', '1*150', 'وعاء ميكرويف مقسم مع الغطاء 8 اونز', '19'],
  ['0.0', '0.1', '0.9', '0.0', '0.8', '0.1', '2.1', '1.0', '1*12', 'بطاطس ويدجز سنبلة 750 جم', '41'],
  ['21381.7', '-172.5', '223.5', '165.0', '12.4', '46.0', '146.5', '51.0', '1*48', 'شبية قشطة لونا ساده & نكهات 155 جم', '58'],
  ['0.0', '0.1', '0.0', '0.0', '0.0', '0.0', '0.0', '0.1', '1*24', 'ديتول للعنايه الشخصيه  250 مل', '65'],
  ['358.4', '5.5', '2.8', '0.0', '1.5', '1.3', '10.4', '8.3', '1*12', 'زيت زيتون بكر نادك 250مل', '103'],
  ['0.0', '11.5', '0.0', '0.0', '0.0', '0.0', '14.8', '11.5', '1*20', 'بطاطس ليز ماكس 50 جم', '114'],
  ['511.8', '-40.6', '40.8', '12.0', '8.6', '20.2', '0.1', '0.2', '1*48', 'ماء المويا 200 مل', '12'],
  ['252.5', '-0.9', '1.8', '0.0', '0.9', '0.8', '0.8', '0.9', '1*24', 'جبنة مثلثات بوك 16 ق 240 جم', '129'],
  ['2007.5', '-36.8', '143.7', '80.0', '55.7', '8.0', '134.9', '106.9', '1*40', 'ماء المويا 300 مل', '13'],
  ['271.1', '-1.0', '1.9', '0.0', '0.8', '1.1', '2.0', '0.9', '1*16', 'جبنه مثلثات بوك 24 ق 360 جم', '130'],
  ['663.2', '2.1', '4.0', '0.0', '1.3', '2.8', '8.7', '6.1', '1*12', 'كاتشب السعوديه ضغاط 825 جم', '140'],
  ['64.1', '2.6', '0.2', '0.0', '0.2', '0.0', '3.8', '2.8', '1*12', 'فانيش ملمع للغسالات 400 مل', '144'],
  ['157.3', '-14.2', '17.0', '0.0', '1.0', '16.0', '3.1', '2.8', '1*4', 'اكتمل الصافي 93 مل', '145'],
  ['0.0', '0.3', '0.0', '0.0', '0.0', '0.0', '0.3', '0.3', '1*288', 'شكولاته ريسس 15 جم', '151'],
  ['16.4', '5.0', '0.2', '0.0', '0.0', '0.2', '5.3', '5.1', '1*24', 'نوتيلا جو تي 1 52 جم', '168'],
  ['155.6', '-1.7', '4.1', '0.0', '1.3', '2.8', '3.2', '2.4', '1*12', 'فرشه اسنان اورلبي (1+2) وسط', '175'],
  ['0.0', '28.6', '0.0', '0.0', '0.0', '0.0', '30.1', '28.6', '1*20', 'كعك الكاس سويتز 20 جم', '176'],
];

const sheets = [
  { text: 'باركود جديد', w: 111 },
  { text: 'باركودات', w: 87 },
  { text: 'الشركات بالاصناف', w: 156 },
  { text: 'المستودع الرئيسي', w: 153 },
  { text: 'سنام5', w: 73 },
  { text: 'سنام 7', w: 78 },
  { text: 'الرصيد اجمالي', w: 126, active: true },
];

const apps = [
  { icon: 'designer', run: 1 }, { icon: 'winrar', run: 1 }, { icon: 'gmail' }, { icon: 'parallels' },
  { icon: 'snip', run: 2 }, { icon: 'outlookNew', run: 1 }, { icon: 'printer' }, { icon: 'disk' },
  { icon: 'calc' }, { icon: 'ppt' }, { icon: 'edge', run: 1 }, { icon: 'firefox', run: 1 },
  { icon: 'chrome', run: 1 }, { icon: 'excel', run: 1 }, { icon: 'store' }, { icon: 'folder', run: 1 },
  { icon: 'word' }, { icon: 'mail' }, { icon: 'outlook' }, { icon: 'onenote' },
  { icon: 'taskview' }, { icon: 'search' }, { icon: 'start' },
];

// conditional formatting of the difference and total columns
function cellClass(c, j) {
  const n = Number(c);
  return {
    pink: (j === 1 && n >= 1) || (j === 2 && n === 0),
    yellow: j === 1 && n < 0,
    cream: j === 6 || j === 7,
  };
}

function split(text) {
  return text.split(/(\d+(?:[.+]\d+)?)/);
}
</script>

<style>
body {
  margin: 0;
  overflow: hidden;
}
.ic {
  display: block;
  flex: none;
  overflow: visible;
}
</style>

<style scoped>
.screen {
  position: relative;
  width: 1918px;
  height: 1078px;
  overflow: hidden;
  background: #e6e6e6;
  color: #262626;
  font: 14px/18px "Open Sans", "Noto Sans", "DejaVu Sans", sans-serif;
  white-space: nowrap;
}
.screen * {
  box-sizing: border-box;
}

.titlebar {
  display: flex;
  height: 43px;
  background: #217346;
  color: #a3cdb6;
}
.titlebar > *,
.tabs > * {
  flex: none;
}
.quick {
  display: flex;
  align-items: center;
  width: 654px;
  padding-left: 27px;
  height: 40px;
}
.quick .ic:nth-child(2) { margin-left: 18px; }
.quick .ic:nth-child(3) { margin-left: 8px; }
.quick .ic:nth-child(4) { margin-left: 14px; }
.quick .ic:nth-child(5) { margin-left: 8px; }
.quick .ic:nth-child(6) { margin: 4px 0 0 22px; }
.pale { color: #b5d8c5; }
.dim { color: #4f9470; }
.tools {
  width: 110px;
  background: #1a5c38;
  padding: 11px 0 0 23px;
  font-size: 12.300px;
}
.doc {
  display: flex;
  width: 851px;
  padding: 13px 0 0 116px;
  font-size: 14.500px;
}
.doc-ar { margin-left: 6px; font-size: 13.500px; }
.dash { margin: 0 9px; }
.signin {
  width: 67px;
  height: 23px;
  margin-top: 10px;
  padding: 0;
  border: 0;
  border-radius: 2px;
  background: #a0cdb4;
  color: #217346;
  font: 14.500px/22px "Open Sans", sans-serif;
}
.window {
  display: flex;
  align-items: center;
  height: 38px;
  margin-left: 28px;
}
.window .ic { margin-right: 43px; }
.window .ic:last-child { margin-right: 0; }

.tabs {
  display: flex;
  height: 38px;
  background: #217346;
  color: #fff;
}
.tab {
  display: flex;
  justify-content: center;
  padding-top: 10px;
}
.tab b { font-weight: 400; }
.file { margin-right: 3px; }
.home { background: #f3f3f3; color: #217346; }
.design { background: #1a5c38; margin-left: 4px; padding-right: 2px; }
.bulb { margin: 8px 0 0 20px; }
.tell { width: 1082px; padding: 10px 0 0 16px; font-size: 14.400px; }
.comment { margin-top: 11px; }

.ribbon {
  display: flex;
  height: 115px;
  padding-top: 5px;
  background: #f3f3f3;
  border-bottom: 1px solid #c9c9c9;
}
.group {
  display: flex;
  flex-direction: column;
  flex: none;
  height: 104px;
  border-right: 1px solid #808080;
}
.caption {
  display: flex;
  justify-content: center;
  position: relative;
  margin-top: auto;
  height: 15px;
  font-size: 12px;
  line-height: 21px;
}
.launch { position: absolute; right: 4px; top: 5px; }
.row { display: grid; align-items: center; justify-items: center; height: 29px; }
.bar { width: 1px; height: 27px; background: #d0d0d0; }
.line { display: flex; align-items: center; height: 29px; }
.line span { margin-left: 5px; }
.big {
  display: flex;
  flex-direction: column;
  align-items: center;
  height: 85px;
}
.big > span {
  display: flex;
  align-items: center;
  gap: 5px;
  line-height: 20px;
  height: 20px;
}
.big > .ic:first-child { margin-bottom: 4px; }
.big > .ic:last-child { margin-top: 6px; }
.bigs { display: flex; padding-top: 1px; }

.clipboard { width: 205px; }
.clip-body { display: flex; }
.paste { width: 72px; padding-top: 1px; }
.paste > .ic:first-child { margin-left: 6px; }
.clip-body .stack { margin-left: -6px; margin-top: -2px; }
.gap-chev { margin-left: 15px; }
.near { margin-left: 5px; }
.clipboard .caption { padding-right: 23px; }

.font { width: 288px; }
.select {
  display: flex;
  align-items: center;
  justify-content: space-between;
  width: 144px;
  height: 29px;
  padding: 0 5px 0 2px;
  border: 1px solid #919191;
  background: #fff;
}
.size { width: 62px; padding-left: 26px; }
.font-top { grid-template-columns: 144px 66px 33px 29px; margin: 8px 0 10px 10px; }
.font-bottom { grid-template-columns: 31px 30px 29px 17px 13px 26px 17px 12px 29px 14px 40px 5px; margin-left: 7px; }
.font-top .ic:nth-child(n + 3) { margin-top: -3px; }
.font-bottom .ic:first-of-type { margin-left: -2px; }
.fmt { font-size: 15px; color: #4d4d4d; font-weight: 700; }
.ital { font-family: "Liberation Serif", serif; font-size: 17px; }
.fontcolor {
  width: 20px;
  height: 22px;
  border-bottom: 5px solid #f00;
  font-size: 17px;
  line-height: 15px;
  font-weight: 600;
  color: #555;
  text-align: center;
}
.font .caption { padding-right: 22px; }

.align { width: 393px; }
.align-body { display: flex; padding-top: 8px; }
.align-left { width: 215px; border-right: 1px solid #d0d0d0; height: 70px; }
.align-row { grid-template-columns: 28px 32px 32px 4px 34px 6px 28px 8px 34px; margin-left: 10px; justify-content: start; }
.second { margin-top: 10px; grid-template-columns: 28px 32px 32px 4px 34px 26px; }
.pressed {
  display: grid;
  place-items: center;
  width: 28px;
  height: 29px;
  border: 1px solid #868686;
  background: #c6c6c6;
}
.align-side { padding-left: 10px; }
.wrap { display: flex; align-items: center; height: 29px; margin-bottom: 10px; }
.wrap span { margin-left: 5px; }
.off { color: #a6a6a6; }
.off span { font-size: 14.300px; }
.off-chev { margin-left: 13px; }
.align .caption { padding-right: 23px; }

.number { width: 194px; }
.numsel { width: 174px; margin: 8px 0 10px 10px; }
.num-row { grid-template-columns: 26px 20px 34px 22px 18px 20px 38px; margin-left: 11px; justify-content: start; }
.pct { font-size: 19px; color: #595959; }
.comma { font: 700 26px/10px "Liberation Serif", serif; color: #595959; padding-bottom: 12px; }
.dec { display: flex; flex-direction: column; align-items: flex-end; font-size: 9.500px; line-height: 9px; color: #555; font-weight: 600; }
.dec span { display: flex; align-items: center; }
.number .caption { padding-right: 21px; }

.styles { width: 239px; }
.styles .big:nth-child(1) { width: 115px; }
.styles .big:nth-child(2) { width: 50px; }
.styles .big:nth-child(3) { width: 80px; }
.styles .big:nth-child(2) .ic:first-child,
.styles .big:nth-child(3) .ic:first-child { margin-left: 3px; }
.cells { width: 176px; }
.cells .big:nth-child(1) { width: 71px; }
.cells .big:nth-child(2) { width: 34px; }
.cells .big:nth-child(3) { width: 68px; }
.editing { width: 248px; }
.edit-body { display: flex; padding-top: 1px; }
.edit-body .stack { width: 124px; padding-left: 15px; margin-top: -3px; }
.sort { width: 59px; }
.find { width: 52px; }
.addins { width: 78px; }
.addins .big { width: 77px; }
.addins .big > .ic { margin-top: 2px; margin-bottom: 2px; margin-left: -2px; }
.collapse { margin: 98px 0 0 76px; }

.formula {
  display: flex;
  height: 42px;
  padding-top: 12px;
}
.formula > div {
  display: flex;
  align-items: center;
  height: 30px;
  border: 1px solid #c6c6c6;
  background: #fff;
}
.namebox { width: 127px; margin-left: 6px; padding: 0 8px 0 6px; justify-content: space-between; font-size: 15px; }
.dots { margin: 8px 17px 0 16px; }
.fx { width: 137px; padding-left: 14px; }
.fx .ic:nth-child(2) { margin-left: 29px; }
.fxs { margin-left: 28px; font: italic 22px/22px "Liberation Serif", serif; color: #555; }
.fxs small { font-size: 16px; }
.input {
  width: 1605px;
  margin-left: 3px;
  padding: 0 5px 0 13px;
  justify-content: space-between;
  color: #333;
  font-size: 15px;
  letter-spacing: 0.450px;
}

.grid { display: flex; height: 726px; }
.vscroll {
  display: flex;
  flex-direction: column;
  width: 25px;
  padding: 14px 3px 0 3px;
}
.sbtn {
  display: grid;
  place-items: center;
  flex: none;
  width: 19px;
  height: 19px;
  border: 1px solid #919191;
  background: #fff;
  color: #222;
}
.thumb { width: 19px; height: 21px; border: 1px solid #919191; background: #fff; }
.space { flex: 1; width: 19px; background: #f3f3f3; }
.sheet { width: 1893px; }
.letters {
  display: grid;
  grid-template-columns: 74px 115px 100px 122px 255px 139px 139px 206px 119px 91px 389px 110px 34px;
  height: 35px;
  padding-top: 12px;
  border-bottom: 1px solid #9b9b9b;
  font: 18px/24px "Liberation Sans", sans-serif;
  color: #111;
  text-align: center;
}
.letters span { border-right: 1px solid #b0b0b0; height: 22px; padding-left: 1px; }
.letters .dbl { border-left: 3px double #b0b0b0; padding: 0 2px 0 0; }
.letters .corner { border: 0; padding: 3px 0 0 3px; }
.letters span:nth-child(1) { padding-right: 11px; }
.letters span:nth-child(2) { padding-left: 3px; }
.body { display: flex; height: 691px; overflow: hidden; }
.void { width: 73px; background: #a0a0a0; }
.table { width: 1786px; border-left: 3px solid #0000c8; border-right: 1px solid #0000c8; border-top: 1px solid #0000c8; }
.head, .tr {
  display: grid;
  grid-template-columns: 113px 100px 122px 255px 139px 139px 206px 119px 91px 389px 109px;
}
.head { height: 38px; background: #548235; border-bottom: 1px solid #9b9b9b; color: #fff; }
.th {
  display: flex;
  position: relative;
  justify-content: center;
  padding-top: 6px;
  border-right: 1px solid #111;
  font: 700 16px/22px "Liberation Sans", "DejaVu Sans", sans-serif;
}
.th:last-child { border-right: 0; }
.th span { flex: none; transform: scaleX(0.84); }
.th.large span { transform: scaleX(0.93); }
.th.unit span { transform: scaleX(0.88); }
.th.light { font-weight: 400; font-size: 17px; }
.th.light span { transform: scaleX(0.94); }
.filter {
  display: grid;
  place-items: center;
  position: absolute;
  left: 0;
  bottom: 1px;
  width: 21px;
  height: 21px;
  border: 1px solid #a5a5a5;
  background: linear-gradient(#fff, #e8ebf0);
}
.tr { height: 26px; background: #fff; }
.even { background: #c6e0b4; }
.tr > div {
  height: 26px;
  overflow: hidden;
  border-right: 1px solid #111;
  border-bottom: 1px solid #111;
  text-align: center;
  font: 18px/26px "Liberation Sans", "DejaVu Sans", sans-serif;
  color: #000;
}
.tr > div:last-child { border-right: 0; }
.tr > .pink { background: #ffc7ce; color: #9c0006; }
.tr > .yellow { background: #ffeb9c; color: #9c5700; }
.tr > .cream { background: #fff0cd; color: #f00; }
.ar { font-size: 14px; white-space: pre; }
.n { font-size: 18px; }
.nums {
  width: 34px;
  font: 18px/27px "Liberation Sans", sans-serif;
  color: #111;
  text-align: center;
}
.nums span { display: block; height: 26px; padding-top: 2px; border-bottom: 1px solid #b5b5b5; }
.nums span:first-child { height: 39px; padding-top: 15px; }

.sheetbar {
  display: flex;
  height: 29px;
  padding-left: 28px;
  border-top: 1px solid #919191;
  border-bottom: 1px solid #c9c9c9;
}
.sheetbar .sbtn { margin-top: 4px; }
.htrack { width: 53px; height: 19px; margin-top: 4px; background: #f3f3f3; }
.hthumb { width: 634px; height: 19px; margin-top: 4px; border: 1px solid #919191; border-right: 0; background: #fff; }
.hdots { margin: 7px 0 0 15px; }
.plus { margin: 3px 0 0 207px; }
.stabs { display: flex; margin-left: 33px; }
.stabs span {
  display: flex;
  justify-content: center;
  height: 21px;
  margin-top: 3px;
  border-left: 1px solid #919191;
  color: #404040;
  font: 16px/16px "DejaVu Sans", sans-serif;
}
.stabs b { flex: none; font-weight: 400; }
.stabs .active {
  margin-top: 0;
  height: 26px;
  padding-top: 3px;
  border-right: 1px solid #919191;
  border-bottom: 2px solid #217346;
  background: #fff;
  color: #217346;
}
.stabs .active b { font-weight: 700; transform: scaleX(0.87); }
.nav { margin: 9px 0 0 22px; color: #bdbdbd; }
.stabs + .nav { margin-left: 41px; }

.status {
  display: flex;
  align-items: center;
  height: 28px;
  background: #f3f3f3;
  border-bottom: 1px solid #b9b9b9;
  font-size: 12px;
}
.ready { width: 60px; margin-left: 14px; }
.status b { width: 1386px; margin-left: 2px; font-size: 12.300px; }
.views { display: flex; height: 27px; margin-left: 65px; }
.views div { display: grid; place-items: center; width: 50px; }
.views .on { background: #c6c6c6; }
.zoom { margin-left: 7px; }
.pctz { margin-left: 15px; font-size: 12px; }

.taskbar {
  display: flex;
  height: 57px;
  background: linear-gradient(90deg, #f0f0f0 1404px, #e1f3b9 1432px);
  color: #222;
}
.bell { margin: 18px 0 0 26px; }
.clock { display: flex; flex-direction: column; width: 90px; margin: 8px 0 0 8px; font-size: 14.200px; line-height: 20px; }
.sound { margin: 20px 0 0 7px; }
.wifi { margin: 19px 0 0 8px; }
.lang { margin: 20px 0 0 32px; font: 16px/20px "DejaVu Sans", sans-serif; }
.tray { margin: 25px 0 0 34px; }
.apps { display: flex; margin-left: 84px; }
.app { display: flex; flex-direction: column; align-items: center; width: 55.050px; padding-top: 14px; }
.app i { width: 8px; height: 4px; margin-top: 6px; border-radius: 2px; background: #8a8a8a; }
.app .wide { width: 18px; }
.weather { position: relative; margin: 8px 0 0 221px; }
.weather span {
  position: absolute;
  left: -12px;
  top: 0;
  width: 28px;
  height: 20px;
  border-radius: 10px;
  background: #f5f6f2;
  font-size: 12px;
  line-height: 20px;
  text-align: center;
}

.mark {
  position: absolute;
  left: 840px;
  top: 940px;
  width: 238px;
  text-align: center;
  color: rgba(140, 140, 140, 0.28);
}
.mark-ar { font: 700 70px/80px "DejaVu Sans", sans-serif; transform: scaleX(0.92); margin: 0 -20px; }
.mark-en { font: 700 38px/36px "Liberation Sans", sans-serif; }
</style>
